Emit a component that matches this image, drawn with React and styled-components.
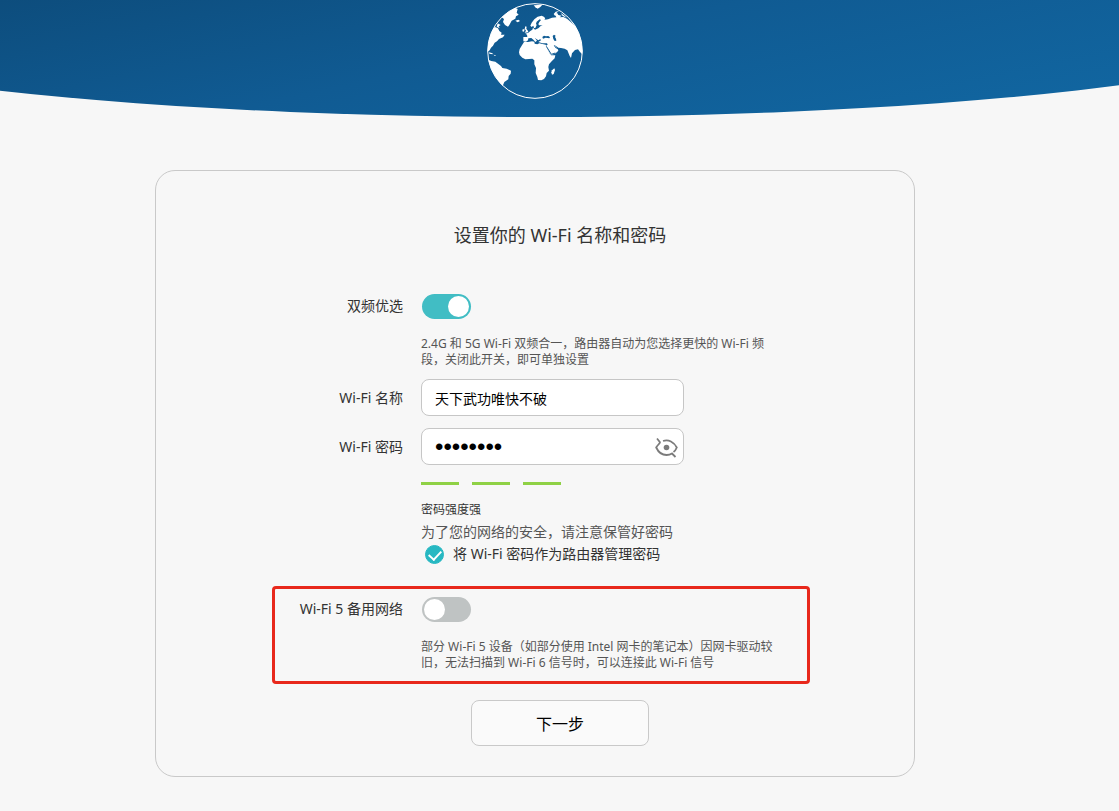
import React, { useState } from "react";
import styled, { createGlobalStyle } from "styled-components";

const GlobalStyle = createGlobalStyle`
  * {
    box-sizing: border-box;
  }

  body {
    margin: 0;
    background-color: #f7f7f7;
    color: #333;
    font-family: "Noto Sans", "Noto Sans CJK SC", sans-serif;
    font-size: 14px;
    line-height: 20px;
  }

  input,
  button {
    font-family: inherit;
  }
`;

// Page components
const Header = styled.header`
  height: 117px;
  padding: 3px 49px 0 0;
  display: flex;
  justify-content: center;
  background: linear-gradient(168deg, #0d4d7d, #105b93 45%, #1167a2);
  clip-path: ellipse(76% 100% at 48% 0);
`;

const GlobeIcon = styled.svg`
  width: 96px;
  height: 96px;
`;

const Main = styled.main`
  display: flex;
  justify-content: center;
  padding: 53px 49px 34px 0;
`;

const Card = styled.form`
  flex: 0 1 760px;
  display: flex;
  flex-direction: column;
  padding: 52px 104px 30px 116px;
  border: 1px solid #c9c9c9;
  border-radius: 20px;
`;

const Title = styled.h1`
  margin: 0 0 44px 38px;
  font-size: 18px;
  font-weight: 400;
  line-height: 24px;
  text-align: center;
`;

// Form components
const Group = styled.section`
  display: flex;
  flex-direction: column;
  gap: 12px;
  border: 3px solid ${props => (props.$marked ? "#e8281c" : "transparent")};
  border-radius: 4px;
  margin-top: ${props => (props.$marked ? "18px" : "0")};
  padding: ${props => (props.$marked ? "8px 0 11px" : "0")};
`;

const Row = styled.div`
  display: grid;
  grid-template-columns: 128px minmax(0, 1fr);
  column-gap: 18px;
  align-items: start;
`;

const Label = styled.label`
  text-align: right;
  line-height: ${props => (props.$tall ? "37px" : "24px")};
`;

const Field = styled.div`
  display: flex;
  flex-direction: column;
  align-items: flex-start;
`;

const Switch = styled.input`
  appearance: none;
  width: 49px;
  height: 25px;
  margin: 0 0 0 1px;
  padding: 2px;
  display: flex;
  justify-content: flex-start;
  border-radius: 13px;
  background-color: #bfc3c3;
  cursor: pointer;

  &::before {
    content: "";
    width: 21px;
    height: 21px;
    border-radius: 50%;
    background-color: #fff;
  }

  &:checked {
    justify-content: flex-end;
    background-color: #41bdc4;
  }
`;

const Hint = styled.p`
  margin: 17px 0 -1px;
  color: #555;
  font-size: 12px;
  line-height: 16px;
  white-space: nowrap;
`;

const InputBox = styled.div`
  display: flex;
  align-items: center;
  width: 263px;
  height: 37px;
  padding: 0 5px 0 13px;
  border: 1px solid #c6c6c6;
  border-radius: 8px;
  background-color: #fff;
`;

const TextInput = styled.input`
  flex: 1;
  min-width: 0;
  padding: 0;
  border: 0;
  outline: 0;
  background: transparent;
  color: #000;
  font-size: 14px;

  &[type="password"] {
    font-family: "Liberation Sans", sans-serif;
    font-size: 24px;
  }
`;

const EyeButton = styled.button`
  display: flex;
  padding: 2px 0 0;
  border: 0;
  background: none;
  cursor: pointer;
`;

const Strength = styled.div`
  display: flex;
  gap: 13px;
  margin: 17px 0 15px;
`;

const StrengthBar = styled.span`
  width: 38px;
  height: 3px;
  background-color: #8fd145;
`;

const StrengthText = styled.p`
  margin: 0;
  font-size: 12px;
  line-height: 20px;
`;

const Notice = styled.p`
  margin: 1px 0 0;
  color: #555;
  line-height: 22px;
`;

const CheckLabel = styled.label`
  display: flex;
  align-items: center;
  gap: 9px;
  padding-left: 4px;
  line-height: 22px;
`;

const Checkbox = styled.input`
  appearance: none;
  width: 19px;
  height: 19px;
  margin: 0;
  display: flex;
  justify-content: center;
  border: 1px solid #27b8c2;
  border-radius: 50%;
  cursor: pointer;

  &:checked {
    background-color: #27b8c2;
  }

  &:checked::before {
    content: "";
    width: 6px;
    height: 10px;
    margin-top: 2px;
    border: solid #fff;
    border-width: 0 2px 2px 0;
    transform: rotate(43deg);
  }
`;

const NextButton = styled.button`
  align-self: center;
  width: 178px;
  height: 46px;
  margin: 16px 0 0 38px;
  border: 1px solid #c9c9c9;
  border-radius: 8px;
  background-color: #fafafa;
  color: #000;
  font-size: 16px;
  cursor: pointer;
`;

const Globe = () => (
  <GlobeIcon viewBox="36 9 288 288" aria-hidden="true">
    <defs>
      <clipPath id="globe">
        <circle cx="180" cy="153" r="142" />
      </clipPath>
    </defs>
    <g fill="#fff" clipPath="url(#globe)">
      {/* Greenland, Iceland, Svalbard */}
      <path d="M80 40 L98 28 L118 22 L128 27 L125 38 L131 44 L123 49 L121 56 L110 62 L103 75 L99 80 L90 75 L84 66 L87 57 L78 50Z" />
      <path d="M121 62 L130 59 L135 63 L128 67Z" />
      <path d="M176 16 L202 14 L196 21 L188 26 L181 22Z" />
      {/* Americas */}
      <path d="M68 70 L77 75 L71 79 L74 85 L65 80Z M60 81 L69 85 L73 93 L80 98 L78 104 L89 104 L84 112 L72 117 L66 124 L59 128 L54 137 L48 143 L44 151 L36 157 L30 105 L51 88Z" />
      <path d="M42 157 L53 160 L53 163 L43 161Z M55 164 L63 166 L60 168Z" />
      <path d="M36 178 L49 183 L61 185 L70 192 L78 198 L82 204 L95 206 L108 212 L107 221 L101 228 L100 238 L88 246 L83 258 L64 248 L40 208Z" />
      {/* British Isles */}
      <path d="M151 79 L155 80 L154 86 L159 93 L160 97 L149 98 L153 92 L149 86Z M143 88 L149 88 L147 95 L142 94Z" />
      {/* Europe and Asia */}
      <path d="M166 77 L170 68 L178 58 L188 50 L200 47 L208 51 L211 58 L206 60 L219 58 L231 53 L244 52 L240 43 L246 38 L250 45 L260 47 L254 52 L265 51 L276 56 L291 69 L340 110 L340 175 L321 162 L315 156 L309 148 L300 150 L291 160 L288 174 L284 168 L277 151 L269 146 L258 144 L250 143 L239 135 L248 147 L250 152 L242 160 L228 166 L222 157 L215 143 L213 137 L218 134 L216 130 L202 130 L190 126 L199 120 L195 118 L190 121 L184 117 L179 113 L186 122 L181 126 L176 120 L169 114 L160 115 L159 121 L153 125 L145 124 L145 111 L157 111 L156 104 L151 101 L160 98 L166 93 L172 89 L174 83 L180 89 L190 85 L194 81 L197 78 L203 76 L192 76 L190 72 L193 66 L198 60 L194 58 L185 65 L183 71 L185 75 L181 84 L177 84 L175 77 L170 81Z" />
      <path d="M236 42 L242 35 L252 33 L245 38 L241 49Z M257 39 L266 45 L275 53 L263 48Z" />
      {/* Africa and Madagascar */}
      <path d="M147 126 L159 126 L171 124 L178 125 L179 131 L187 133 L193 130 L202 132 L212 134 L218 148 L223 158 L228 166 L241 166 L239 175 L230 184 L222 193 L220 201 L222 212 L215 219 L213 229 L207 237 L199 241 L189 240 L187 231 L182 219 L183 204 L178 193 L178 181 L172 176 L162 177 L151 178 L142 173 L134 165 L132 157 L134 147 L140 137Z" />
      <path d="M238 205 L240 210 L236 222 L231 224 L229 217 L231 211Z" />
    </g>
    {/* Black, Caspian and Red seas, Persian Gulf */}
    <g fill="#105c94">
      <path d="M202 111 L207 107 L213 109 L220 108 L225 112 L223 115 L212 113 L204 116Z" />
      <path d="M233 108 L237 104 L242 107 L240 111 L243 116 L244 122 L239 123 L235 117Z" />
    </g>
    <path d="M214 139 L229 163 L241 159 M238 136 L242 143 L250 146" fill="none" stroke="#105c94" strokeWidth="3" />
    <circle cx="180" cy="153" r="142" fill="none" stroke="#fff" strokeWidth="3" />
  </GlobeIcon>
);

const EyeIcon = () => (
  <svg width="23" height="22" viewBox="0 0 23 22" fill="none" stroke="#7b7b7b" strokeWidth="1.8" aria-hidden="true">
    <path d="M2 1.500 L5 5.200 C5 6.500 2.500 8 1.200 10.500 C3.500 15.500 7.500 18 11.500 18 C14 18 15.500 17.500 17 16.500 L20.500 20" />
    <path d="M8 4 C13.500 2 19 5 21.800 10.500 C21 12.500 20 14 18.500 15" />
    <circle cx="11.500" cy="10.500" r="2.800" fill="#7b7b7b" stroke="none" />
  </svg>
);

const App = () => {
  const [dualBand, setDualBand] = useState(true);
  const [name, setName] = useState("天下武功唯快不破");
  const [password, setPassword] = useState("password");
  const [showPassword, setShowPassword] = useState(false);
  const [samePassword, setSamePassword] = useState(true);
  const [backup, setBackup] = useState(false);

  return (
    <div lang="zh-CN">
      <GlobalStyle />
      <Header>
        <Globe />
      </Header>
      <Main>
        <Card onSubmit={e => e.preventDefault()}>
          <Title>设置你的 Wi-Fi 名称和密码</Title>
          <Group>
            <Row>
              <Label htmlFor="dual-band">双频优选</Label>
              <Field>
                <Switch
                  id="dual-band"
                  type="checkbox"
                  checked={dualBand}
                  onChange={e => setDualBand(e.target.checked)}
                />
                <Hint>
                  2.4G 和 5G Wi-Fi 双频合一，路由器自动为您选择更快的 Wi-Fi 频
                  <br />
                  段，关闭此开关，即可单独设置
                </Hint>
              </Field>
            </Row>
            <Row>
              <Label htmlFor="wifi-name" $tall>Wi-Fi 名称</Label>
              <InputBox>
                <TextInput
                  id="wifi-name"
                  type="text"
                  value={name}
                  onChange={e => setName(e.target.value)}
                />
              </InputBox>
            </Row>
            <Row>
              <Label htmlFor="wifi-password" $tall>Wi-Fi 密码</Label>
              <Field>
                <InputBox>
                  <TextInput
                    id="wifi-password"
                    type={showPassword ? "text" : "password"}
                    value={password}
                    onChange={e => setPassword(e.target.value)}
                  />
                  <EyeButton
                    type="button"
                    aria-label="显示密码"
                    onClick={() => setShowPassword(!showPassword)}
                  >
                    <EyeIcon />
                  </EyeButton>
                </InputBox>
                <Strength>
                  <StrengthBar />
                  <StrengthBar />
                  <StrengthBar />
                </Strength>
                <StrengthText>密码强度强</StrengthText>
                <Notice>为了您的网络的安全，请注意保管好密码</Notice>
                <CheckLabel>
                  <Checkbox
                    type="checkbox"
                    checked={samePassword}
                    onChange={e => setSamePassword(e.target.checked)}
                  />
                  将 Wi-Fi 密码作为路由器管理密码
                </CheckLabel>
              </Field>
            </Row>
          </Group>
          <Group $marked>
            <Row>
              <Label htmlFor="backup">Wi-Fi 5 备用网络</Label>
              <Field>
                <Switch
                  id="backup"
                  type="checkbox"
                  checked={backup}
                  onChange={e => setBackup(e.target.checked)}
                />
                <Hint>
                  部分 Wi-Fi 5 设备（如部分使用 Intel 网卡的笔记本）因网卡驱动较
                  <br />
                  旧，无法扫描到 Wi-Fi 6 信号时，可以连接此 Wi-Fi 信号
                </Hint>
              </Field>
            </Row>
          </Group>
          <NextButton type="submit">下一步</NextButton>
        </Card>
      </Main>
    </div>
  );
};

export default App;
